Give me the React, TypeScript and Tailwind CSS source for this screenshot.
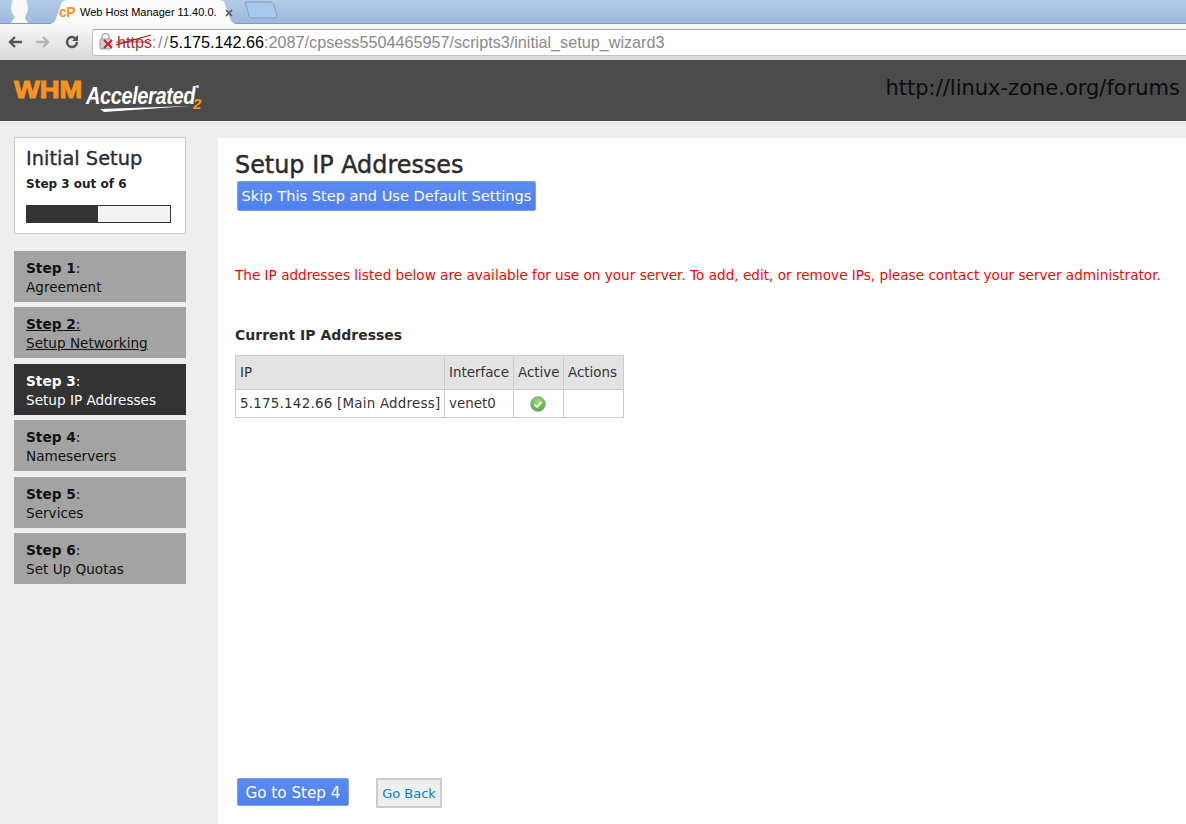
const dejavu = "font-['DejaVu_Sans',sans-serif]";

const steps = [
  { n: "Step 1", label: "Agreement" },
  { n: "Step 2", label: "Setup Networking", link: true },
  { n: "Step 3", label: "Setup IP Addresses", active: true },
  { n: "Step 4", label: "Nameservers" },
  { n: "Step 5", label: "Services" },
  { n: "Step 6", label: "Set Up Quotas" },
];

function TabStrip() {
  return (
    <div className="flex h-[24px] items-end border-b border-[#7d97bd] bg-gradient-to-b from-[#b4cbe8] to-[#9db9dd]">
      <svg width="40" height="23" viewBox="0 0 40 23" className="shrink-0">
        <path d="M11 23c1-3 3-4 4-6-2-2-4-5-4-9 0-3 1-6 2-8h13c1 3 2 5 2 8 0 4-2 7-3 9 0 2 2 4 3 6z" fill="#fafafa" />
      </svg>
      <div className="relative -mb-px ml-[8px] h-[24px] w-[198px] shrink-0">
        <svg width="198" height="24" viewBox="0 0 198 24" className="absolute inset-0">
          <path d="M0 24c6 0 7-2 9-8l4-12c1-3 3-4 6-4h152c3 0 5 1 6 4l5 14c1 4 4 6 8 6z" fill="#fbfbfb" />
        </svg>
        <div className="relative flex h-full items-center pt-[1px]">
          <span className="ml-[11px] w-[20px] font-['Liberation_Sans',sans-serif] text-[14px] font-bold tracking-[-0.5px] text-[#f7941d]">cP</span>
          <span className="ml-[1px] font-['Liberation_Sans',sans-serif] text-[11px] text-black">Web Host Manager 11.40.0.</span>
          <svg width="8" height="8" viewBox="0 0 8 8" className="ml-[8px]">
            <path d="M1 1l6 6M7 1L1 7" stroke="#555" strokeWidth="1.6" />
          </svg>
        </div>
      </div>
      <svg width="34" height="18" viewBox="0 0 34 18" className="-ml-[2px] mb-[4px] shrink-0">
        <path d="M1 1h25c2 0 3 1 4 3l3 10c0 1 0 3-2 3H8c-2 0-3-1-3-3L1 1z" fill="#a9c8ee" stroke="#7e9cc3" />
      </svg>
    </div>
  );
}

function Toolbar() {
  return (
    <div className="flex h-[36px] items-center overflow-hidden bg-gradient-to-b from-[#f8f8f8] to-[#d9d9d9]">
      <svg width="18" height="16" viewBox="0 0 18 16" className="ml-[6px]">
        <path d="M16 8H4M9 3L4 8l5 5" fill="none" stroke="#555" strokeWidth="2.4" />
      </svg>
      <svg width="18" height="16" viewBox="0 0 18 16" className="ml-[10px]">
        <path d="M2 8h12M9 3l5 5-5 5" fill="none" stroke="#b5b5b5" strokeWidth="2.4" />
      </svg>
      <svg width="18" height="18" viewBox="0 0 18 18" className="ml-[11px]">
        <path d="M14 9a5 5 0 1 1-1.6-3.7" fill="none" stroke="#555" strokeWidth="2.4" />
        <path d="M15 2v6H9z" fill="#555" />
      </svg>
      <div className="ml-[11px] -mr-[6px] flex h-[27px] flex-1 items-center rounded-[3px] border border-[#c0c0c0] border-t-[#a5a5a5] bg-white font-['Liberation_Sans',sans-serif] text-[16.2px]">
        <svg width="20" height="18" viewBox="0 0 20 18" className="ml-[6px] shrink-0">
          <rect x="1" y="6" width="11" height="10" rx="1" fill="#d0d0d0" stroke="#999" />
          <path d="M3 6V4a3.5 3.5 0 0 1 7 0v2" fill="none" stroke="#aaa" strokeWidth="1.5" />
          <path d="M5 7l8 8M13 7l-8 8" stroke="#c8201c" strokeWidth="2" />
        </svg>
        <span className="relative ml-[-2px] text-[#8a8a8a]">
          <span className="text-[#a33]">https</span>
          <svg width="36" height="14" viewBox="0 0 36 14" className="absolute left-[-1px] top-[3px]">
            <path d="M0 12L35 2" stroke="#b01010" strokeWidth="1.3" />
            <path d="M0 9h34" stroke="#b01010" strokeWidth="0.8" />
          </svg>
          <span className="tracking-[1.3px]">://</span>
          <span className="text-black">5.175.142.66</span>
          :2087/cpsess5504465957/scripts3/initial_setup_wizard3
        </span>
      </div>
    </div>
  );
}

function Header() {
  return (
    <div className="flex h-[61px] items-center justify-between bg-[#4b4b4b] pl-[14px] pr-[6px]">
      <div className="relative flex h-[40px] w-[190px] items-center font-['Liberation_Sans',sans-serif]">
        <span className="relative -top-px w-[72px] origin-left scale-x-[1.14] text-[24px] font-bold text-[#f7931e] [-webkit-text-stroke:1px_#f7931e]">WHM</span>
        <span className="relative top-[5px] origin-left scale-y-[1.2] text-[20px] font-bold italic tracking-[-0.4px] text-white">Accelerated</span>
        <span className="absolute left-[179px] top-[22px] text-[15px] font-bold italic text-[#f7931e]">2</span>
        <svg width="90" height="6" viewBox="0 0 90 6" className="absolute left-[86px] top-[35px]">
          <path d="M0 3L90 0 4 6z" fill="#ffffff" />
        </svg>
        <svg width="3" height="3" viewBox="0 0 3 3" className="absolute left-[182px] top-[14px]">
          <circle cx="1.5" cy="1.5" r="1.5" fill="#dddddd" />
        </svg>
      </div>
      <span className={`${dejavu} mb-[3px] text-[21px] text-[#0c0c0c]`}>http://linux-zone.org/forums</span>
    </div>
  );
}

function Sidebar() {
  return (
    <div className="w-[218px] shrink-0 pl-[14px] pr-[32px] pt-[16px]">
      <div className="h-[97px] border border-[#cccccc] bg-white pl-[11px] pt-[10px]">
        <div className="text-[19.4px] leading-[22px] text-[#2b2b3a] [-webkit-text-stroke:0.35px_#2b2b3a]">Initial Setup</div>
        <div className="mt-[6px] text-[12px] font-bold leading-[16px] text-[#222]">Step 3 out of 6</div>
        <div className="mt-[13px] h-[18px] w-[145px] border border-[#333] bg-[#f3f3f3]">
          <div className="h-full w-[71px] bg-[#333]" />
        </div>
      </div>
      <div className="mt-[17px] flex flex-col gap-[5.4px]">
        {steps.map((s) => (
          <div
            key={s.n}
            className={`h-[51px] pl-[12px] pt-[8px] leading-[19px] ${
              s.active ? "bg-[#333333] text-white" : "bg-[#a3a3a3] text-[#111]"
            } ${s.link ? "underline" : ""}`}
          >
            <div className="text-[13.7px]">
              <span className="font-bold">{s.n}</span>:
            </div>
            <div className="text-[13.6px]">{s.label}</div>
          </div>
        ))}
      </div>
    </div>
  );
}

function Main() {
  return (
    <div className="mt-[17px] flex min-w-0 flex-1 flex-col bg-white pl-[17px]">
      <h1 className="mt-[13px] text-[23.9px] leading-[28px] text-[#2b2b2b] [-webkit-text-stroke:0.45px_#2b2b2b]">Setup IP Addresses</h1>
      <button className="ml-[2px] mt-[2px] h-[30px] w-[299px] rounded-[2px] border border-[#7f9fe8] bg-gradient-to-b from-[#5a8bf5] to-[#4f7fee] pb-[1px] text-[14.6px] text-white">
        Skip This Step and Use Default Settings
      </button>
      <p className="mt-[55px] whitespace-nowrap text-[13.6px] leading-[18px] text-[#ff0000]">
        The IP addresses listed below are available for use on your server. To add, edit, or remove IPs, please contact your server administrator.
      </p>
      <h2 className="mt-[42px] text-[14px] font-bold leading-[18px] text-[#2b2b2b]">Current IP Addresses</h2>
      <table className="mt-[11px] w-[389px] table-fixed border-collapse text-[13.4px] text-[#333]">
        <colgroup>
          <col className="w-[209px]" />
          <col className="w-[69px]" />
          <col className="w-[50px]" />
          <col className="w-[60px]" />
        </colgroup>
        <thead>
          <tr className="h-[34px] bg-[#e3e3e3] text-left">
            {["IP", "Interface", "Active", "Actions"].map((h) => (
              <th key={h} className="whitespace-nowrap border border-[#cccccc] px-[4px] pt-[2px] font-normal">
                {h}
              </th>
            ))}
          </tr>
        </thead>
        <tbody>
          <tr className="h-[28px]">
            <td className="whitespace-nowrap border border-[#cccccc] px-[4px] pt-[1px] tracking-[0.25px]">5.175.142.66 [Main Address]</td>
            <td className="border border-[#cccccc] px-[4px] pt-[1px]">venet0</td>
            <td className="border border-[#cccccc] px-[4px]">
              <svg width="16" height="16" viewBox="0 0 16 16" className="ml-[12px]">
                <defs>
                  <radialGradient id="ok" cx="50%" cy="35%" r="70%">
                    <stop offset="0%" stopColor="#a5dc86" />
                    <stop offset="100%" stopColor="#4f9e3c" />
                  </radialGradient>
                </defs>
                <circle cx="8" cy="8" r="7.5" fill="url(#ok)" stroke="#9db896" strokeWidth="0.8" />
                <path d="M4.5 8.5l2.5 2.3L11.5 5.8" fill="none" stroke="#f4fff0" strokeWidth="2" />
              </svg>
            </td>
            <td className="border border-[#cccccc] px-[4px]" />
          </tr>
        </tbody>
      </table>
      <div className="mt-auto flex items-start pb-[16px] pl-[2px]">
        <button className="h-[28px] w-[112px] rounded-[2px] border border-[#7f9fe8] bg-gradient-to-b from-[#5a8bf5] to-[#4f7fee] pt-[3px] text-[15.2px] text-white">
          Go to Step 4
        </button>
        <button className="ml-[27px] h-[30px] w-[66px] border-2 border-[#cccccc] bg-[#eeeeee] pt-[1px] text-[13px] text-[#0a7fc2]">
          Go Back
        </button>
      </div>
    </div>
  );
}

export default function App() {
  return (
    <div className={`flex h-[824px] w-[1186px] flex-col overflow-hidden bg-[#eeeeee] ${dejavu}`}>
      <TabStrip />
      <Toolbar />
      <Header />
      <div className="flex min-h-0 flex-1">
        <Sidebar />
        <Main />
      </div>
    </div>
  );
}
